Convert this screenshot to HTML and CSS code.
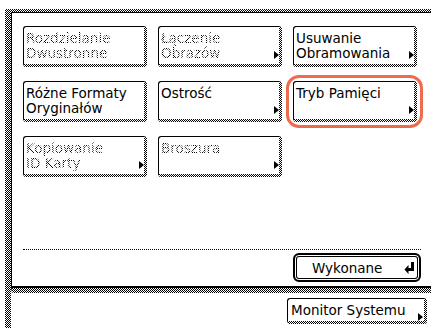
FILE: index.html
```html
<!DOCTYPE html>
<html lang="pl">

<head>
  <meta charset="UTF-8">
  <meta name="viewport" content="width=device-width, initial-scale=1.0">
  <title>Funkcje specjalne</title>
  <link rel="stylesheet" href="styles.css">
</head>

<body>
  <div class="screen">
    <div class="panel">
      <div class="grid">
        <div class="key off"><span class="label">Rozdzielanie<br>Dwustronne</span></div>
        <div class="key off arrow"><span class="label">Łączenie<br>Obrazów</span></div>
        <div class="key arrow"><span class="label">Usuwanie<br>Obramowania</span></div>
        <div class="key"><span class="label">Różne Formaty<br>Oryginałów</span></div>
        <div class="key arrow"><span class="label">Ostrość</span></div>
        <div class="key arrow picked"><span class="label">Tryb Pamięci</span></div>
        <div class="key off arrow"><span class="label">Kopiowanie<br>ID Karty</span></div>
        <div class="key off arrow"><span class="label">Broszura</span></div>
      </div>

      <div class="rule"></div>

      <div class="done-row">
        <button class="done">
          <span>Wykonane</span>
          <svg width="10" height="12" viewBox="0 0 10 12">
            <path d="M7 0h3v9H4.5v3L0.5 7.5 4.5 3v3H7z" fill="#000" />
          </svg>
        </button>
      </div>
    </div>

    <div class="foot">
      <div class="key monitor arrow"><span class="label">Monitor Systemu</span></div>
    </div>
  </div>
</body>

</html>
```

FILE: styles.css
```css
body {
  margin: 0;
  width: 431px;
  height: 328px;
  overflow: hidden;
  background: #fff;
  color: #000;
  font-family: "DejaVu Sans", sans-serif;
  font-size: 13.5px;
}

/* outer frame: dithered strip on the left and on top */
.screen {
  margin: 9px 0 0 5px;
  height: 319px;
  border-left: 6px solid transparent;
  border-top: 3px solid transparent;
  background: linear-gradient(#fff, #fff) padding-box,
    repeating-conic-gradient(#000 0 25%, #fff 0 50%) 0 0 / 2px 2px border-box;
}

.panel {
  border-top: 1px solid #000;
  border-left: 1px solid #000;
  border-bottom: 5px solid transparent;
  border-bottom-left-radius: 3px;
  padding: 13px 10px 6px 11px;
  background: linear-gradient(#fff, #fff) padding-box,
    repeating-conic-gradient(#000 0 25%, #fff 0 50%) 0 0 / 2px 2px border-box;
  box-shadow: inset 0 -2px 0 #000;
}

.grid {
  display: grid;
  grid-template-columns: repeat(3, 124px);
  grid-auto-rows: 41px;
  column-gap: 11px;
  row-gap: 14px;
}

.key {
  position: relative;
  box-sizing: border-box;
  border-top: 1px solid #000;
  border-left: 1px solid #000;
  border-right: 3px solid transparent;
  border-bottom: 3px solid transparent;
  border-radius: 3px;
  padding: 4px 0 0 2px;
  line-height: 15px;
  white-space: nowrap;
  background: linear-gradient(#fff, #fff) padding-box,
    repeating-conic-gradient(#000 0 25%, #fff 0 50%) 0 0 / 2px 2px border-box;
}

.arrow::after {
  content: "";
  position: absolute;
  right: 0;
  bottom: 5px;
  width: 0;
  height: 0;
  border-left: 5px solid #000;
  border-top: 4px solid transparent;
  border-bottom: 4px solid transparent;
}

/* greyed-out keys: dotted lettering */
.off .label {
  color: transparent;
  background: repeating-conic-gradient(#000 0 25%, #fff 0 50%) 0 0 / 2px 2px;
  -webkit-background-clip: text;
  background-clip: text;
}

.picked::before {
  content: "";
  position: absolute;
  left: -8px;
  top: -7px;
  right: -9px;
  bottom: -9px;
  border: 3px solid #ef6b4f;
  border-radius: 13px;
}

.rule {
  margin-top: 72px;
  border-top: 1px dotted #000;
}

.done-row {
  display: flex;
  justify-content: flex-end;
  margin-top: 3px;
}

.done {
  box-sizing: border-box;
  width: 128px;
  height: 29px;
  margin-right: 0;
  display: flex;
  align-items: center;
  justify-content: space-between;
  padding: 0 5px 0 17px;
  border: 2px solid #000;
  border-radius: 6px;
  background: #fff;
  box-shadow: inset 0 0 0 1px #fff, inset 0 0 0 2px #000;
  font: inherit;
  color: #000;
}

.foot {
  display: flex;
  justify-content: flex-end;
  padding: 5px 4px 0 0;
}

.monitor {
  width: 140px;
  height: 26px;
  padding: 4px 0 0 3px;
}

.monitor::after {
  right: 1px;
  bottom: 0;
}
```
